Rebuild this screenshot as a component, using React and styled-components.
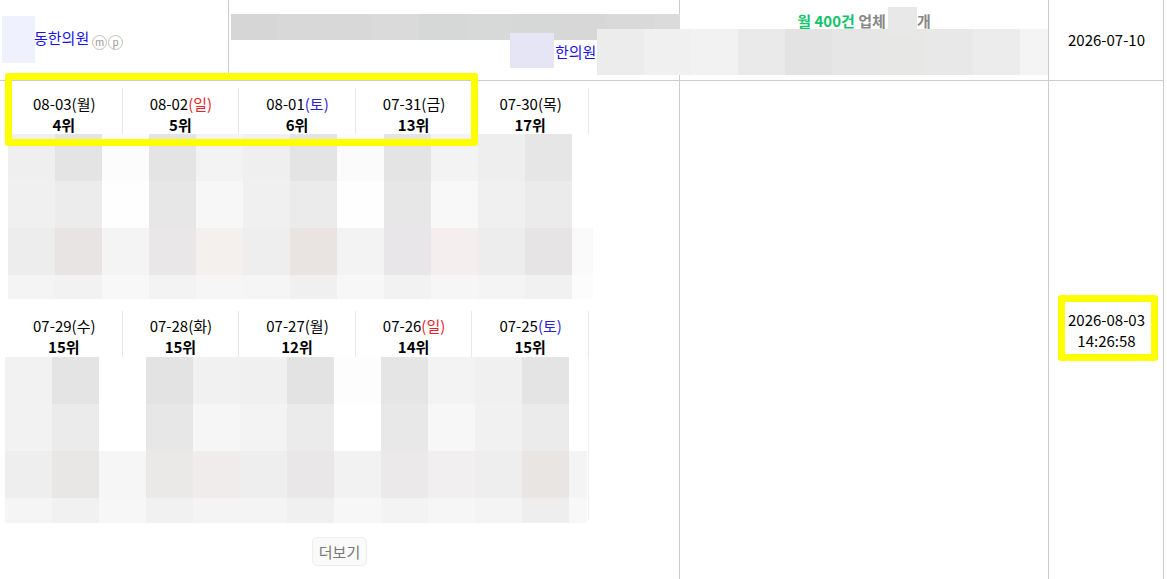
import React from "react";
import styled, { createGlobalStyle } from "styled-components";

const topRows = [
  ["#efefef", "#e4e4e4", "#fcfcfc", "#e4e4e4", "#f3f3f3", "#efefef", "#e4e4e4", "#fbfbfb", "#e4e4e4", "#f3f3f3", "#eeeeee", "#e6e6e6", "#ffffff"],
  ["#f0f0f0", "#ececec", "#fefefe", "#e7e7e7", "#f7f7f7", "#f0f0f0", "#ebebeb", "#fefefe", "#e7e7e7", "#f8f8f8", "#f0f0f0", "#ebebeb", "#ffffff"],
  ["#eeeded", "#e8e4e3", "#f4f4f4", "#e9e7e8", "#f3f0ee", "#efeeee", "#e9e4e1", "#f4f3f3", "#e8e6e8", "#f4efee", "#eeeded", "#e7e4e5", "#fafafa"],
  ["#f4f4f4", "#f2f2f2", "#f8f8f8", "#f3f3f3", "#f6f6f6", "#f5f5f5", "#f0f0f0", "#f7f7f7", "#f2f2f2", "#f6f6f6", "#f4f4f4", "#f1f1f1", "#fcfcfc"],
];

const bottomRows = [
  ["#f2f2f2", "#e4e4e4", "#ffffff", "#e3e3e3", "#f1f1f1", "#f0f0f0", "#e3e3e3", "#fdfdfd", "#e5e5e5", "#f3f3f3", "#f0f0f0", "#e4e4e4", "#ffffff"],
  ["#f2f2f2", "#ebebeb", "#ffffff", "#e7e7e7", "#f6f6f6", "#f3f3f3", "#ebebeb", "#ffffff", "#e8e8e8", "#f7f7f7", "#f1f1f1", "#ebebeb", "#ffffff"],
  ["#eeeeee", "#e9e6e6", "#f6f6f6", "#ebe8e8", "#efeceb", "#efeeee", "#e9e7e8", "#f3f2f2", "#ebe9ea", "#f1efef", "#efeeee", "#e9e5e2", "#f4f4f4"],
  ["#f5f5f5", "#f1f1f1", "#f7f7f7", "#f1f1f1", "#f4f4f4", "#f4f4f4", "#f0f0f0", "#f7f7f7", "#f3f3f3", "#f6f6f6", "#f4f4f4", "#eeeeee", "#f8f8f8"],
];

const barColors = ["#d6d6d6", "#d8d8d8", "#d8d8d8", "#dadada", "#d6d7d7", "#d7d8d8", "#d6d7d7", "#d6d7d6", "#d9d9d9", "#dbdbdb"];
const nameColors = ["#ececec", "#f0f0f0", "#f2f2f2", "#eaeaea", "#e3e3e3", "#e6e6e6", "#e7e7e6", "#e8e8e8", "#ececec", "#f4f4f4"];

const firstWeek = [
  { date: "08-03", day: "월", rank: 4 },
  { date: "08-02", day: "일", rank: 5 },
  { date: "08-01", day: "토", rank: 6 },
  { date: "07-31", day: "금", rank: 13 },
  { date: "07-30", day: "목", rank: 17 },
];

const secondWeek = [
  { date: "07-29", day: "수", rank: 15 },
  { date: "07-28", day: "화", rank: 15 },
  { date: "07-27", day: "월", rank: 12 },
  { date: "07-26", day: "일", rank: 14 },
  { date: "07-25", day: "토", rank: 15 },
];

const dayColor = (day) => {
  if (day === "일") return "#e8212b";
  if (day === "토") return "#2a1fe0";
  return "inherit";
};

const App = () => {
  return (
    <Table>
      <GlobalStyle />
      <NameCell>
        <Swatch />
        <NameLink>동한의원</NameLink>
        <Badge>m</Badge>
        <Badge>p</Badge>
      </NameCell>
      <TitleCell>
        <Strip>
          {barColors.map((color, i) => (
            <StripBlock key={i} $color={color} $last={26} />
          ))}
        </Strip>
        <TitleRow>
          <TitleSwatch />
          <TitleLink>한의원</TitleLink>
          <Strip $wide>
            {nameColors.map((color, i) => (
              <StripBlock key={i} $color={color} $tall $last={28} />
            ))}
          </Strip>
        </TitleRow>
      </TitleCell>
      <PlanCell>
        <Green>월 400건</Green> <Muted>업체</Muted>
        <PlanSwatch />
        <Muted>개</Muted>
      </PlanCell>
      <DateCell>2026-07-10</DateCell>

      <RankCell>
        <Week>
          <DateRow>
            {firstWeek.map((item) => (
              <DayBox key={item.date} $top={5}>
                <DayLabel>
                  {item.date}
                  <DayName $color={dayColor(item.day)}>({item.day})</DayName>
                </DayLabel>
                <Rank>{item.rank}위</Rank>
              </DayBox>
            ))}
          </DateRow>
          <Mosaic $left={8} $end={21}>
            {topRows.map((row, r) =>
              row.map((color, c) => <MosaicBlock key={`${r}-${c}`} $color={color} $height={r === 3 ? 24 : 47} />)
            )}
          </Mosaic>
          <Highlight />
        </Week>
        <Week $line>
          <DateRow>
            {secondWeek.map((item) => (
              <DayBox key={item.date} $top={4}>
                <DayLabel>
                  {item.date}
                  <DayName $color={dayColor(item.day)}>({item.day})</DayName>
                </DayLabel>
                <Rank>{item.rank}위</Rank>
              </DayBox>
            ))}
          </DateRow>
          <Mosaic $left={5} $end={18}>
            {bottomRows.map((row, r) =>
              row.map((color, c) => <MosaicBlock key={`${r}-${c}`} $color={color} $height={r === 3 ? 25 : 47} />)
            )}
          </Mosaic>
        </Week>
        <MoreButton>더보기</MoreButton>
      </RankCell>
      <EmptyCell />
      <TimeCell>
        2026-08-03
        <br />
        14:26:58
        <TimeHighlight />
      </TimeCell>
    </Table>
  );
};

const GlobalStyle = createGlobalStyle`
  html, body {
    margin: 0;
    padding: 0;
    background: #fff;
    overflow: hidden;
  }
  body {
    font-family: "Noto Sans CJK KR", "Noto Sans", sans-serif;
    font-size: 15px;
    color: #000;
  }
`;

const Table = styled.div`
  display: grid;
  grid-template-columns: 229px 451px 369px 115px;
  grid-template-rows: 81px 498px;
  width: 1164px;
  height: 579px;
`;

const Cell = styled.div`
  box-sizing: border-box;
  border-right: 1px solid #ccc;
  border-bottom: 1px solid #ccc;
`;

const NameCell = styled(Cell)`
  display: flex;
  align-items: center;
  padding: 0 0 1px 2px;
`;

const Swatch = styled.span`
  width: 33px;
  height: 47px;
  margin-right: -1px;
  background: #f0f1ff;
`;

const ShopLink = styled.a`
  color: #1a12ee;
  line-height: 20px;
  white-space: nowrap;
`;

const NameLink = styled(ShopLink)`
  margin: -4px 3px 0 0;
`;

const TitleLink = styled(ShopLink)`
  margin-top: 9px;
`;

const Badge = styled.span`
  box-sizing: border-box;
  width: 15px;
  height: 15px;
  margin-top: 6px;
  border: 1px solid #c4bdb4;
  border-radius: 50%;
  background: #fff;
  color: #999;
  font-size: 10px;
  line-height: 12px;
  text-align: center;

  & + & {
    margin-left: 1px;
  }
`;

const TitleCell = styled(Cell)`
  position: relative;
  padding: 14px 0 0 2px;
`;

const Strip = styled.div`
  display: flex;
  position: relative;
  width: ${({ $wide }) => ($wide ? "451px" : "449px")};
  flex-shrink: 0;
  margin-top: ${({ $wide }) => ($wide ? "-4px" : "0")};
  margin-left: ${({ $wide }) => ($wide ? "1px" : "0")};
  z-index: 1;
`;

const StripBlock = styled.div`
  flex: 0 0 47px;
  height: ${({ $tall }) => ($tall ? "46px" : "26px")};
  background: ${({ $color }) => $color};

  &:last-child {
    flex-basis: ${({ $last }) => $last}px;
  }
`;

const TitleRow = styled.div`
  display: flex;
  align-items: flex-start;
  margin: -7px 0 0 279px;
  position: relative;
  z-index: 1;
`;

const TitleSwatch = styled.span`
  flex: 0 0 44px;
  height: 35px;
  margin-right: 1px;
  background: #e5e5f5;
`;

const PlanCell = styled(Cell)`
  position: relative;
  z-index: 2;
  padding-top: 7px;
  text-align: center;
  font-weight: 700;
  line-height: 27px;
`;

const Green = styled.span`
  color: #12c46b;
`;

const Muted = styled.span`
  color: #888;
`;

const PlanSwatch = styled.span`
  display: inline-block;
  width: 29px;
  height: 27px;
  margin-left: 2px;
  vertical-align: top;
  background: #e8e8e8;
`;

const DateCell = styled(Cell)`
  display: flex;
  align-items: center;
  justify-content: center;
  padding: 0 0 2px 1px;
`;

const RankCell = styled.div`
  grid-column: 1 / 3;
  box-sizing: border-box;
  border-right: 1px solid #ccc;
  padding-top: 7px;
  display: flex;
  flex-direction: column;
`;

const Week = styled.section`
  position: relative;
  width: 583px;
  margin-left: 6px;
  margin-bottom: 12px;
  box-sizing: border-box;
  height: ${({ $line }) => ($line ? "209px" : "auto")};
  border-right: ${({ $line }) => ($line ? "1px solid #eee" : "0")};
`;

const DateRow = styled.div`
  display: grid;
  grid-template-columns: repeat(5, 116.6px);
  height: 46px;
`;

const DayBox = styled.div`
  box-sizing: border-box;
  border-right: 1px solid #e8e8e8;
  padding-top: ${({ $top }) => $top}px;
  text-align: center;
  line-height: 21px;
`;

const DayLabel = styled.div`
  padding-left: 1px;
  white-space: nowrap;
`;

const DayName = styled.span`
  color: ${({ $color }) => $color};
`;

const Rank = styled.div`
  font-weight: 700;
  color: #000;
`;

const Mosaic = styled.div`
  display: grid;
  grid-template-columns: repeat(12, 47px) ${({ $end }) => $end}px;
  margin-left: ${({ $left }) => $left - 6}px;
  width: 585px;
`;

const MosaicBlock = styled.div`
  height: ${({ $height }) => $height}px;
  background: ${({ $color }) => $color};
`;

const Highlight = styled.div`
  position: absolute;
  left: -1px;
  top: -15px;
  box-sizing: border-box;
  width: 473px;
  height: 73px;
  border: 7px solid #ffff00;
  border-radius: 3px;
  z-index: 3;
`;

const MoreButton = styled.button`
  align-self: center;
  box-sizing: border-box;
  width: 55px;
  height: 29px;
  margin-top: 5px;
  padding: 0;
  border: 1px solid #eee;
  border-radius: 5px;
  background: #fafafa;
  color: #777;
  font: inherit;
`;

const EmptyCell = styled.div`
  box-sizing: border-box;
  border-right: 1px solid #ccc;
`;

const TimeCell = styled.div`
  position: relative;
  box-sizing: border-box;
  border-right: 1px solid #ccc;
  display: block;
  padding: 228px 0 0 1px;
  text-align: center;
  line-height: 21px;
`;

const TimeHighlight = styled.div`
  position: absolute;
  left: 9px;
  top: 214px;
  box-sizing: border-box;
  width: 100px;
  height: 66px;
  border: 7px solid #ffff00;
  border-radius: 3px;
`;

export default App;
